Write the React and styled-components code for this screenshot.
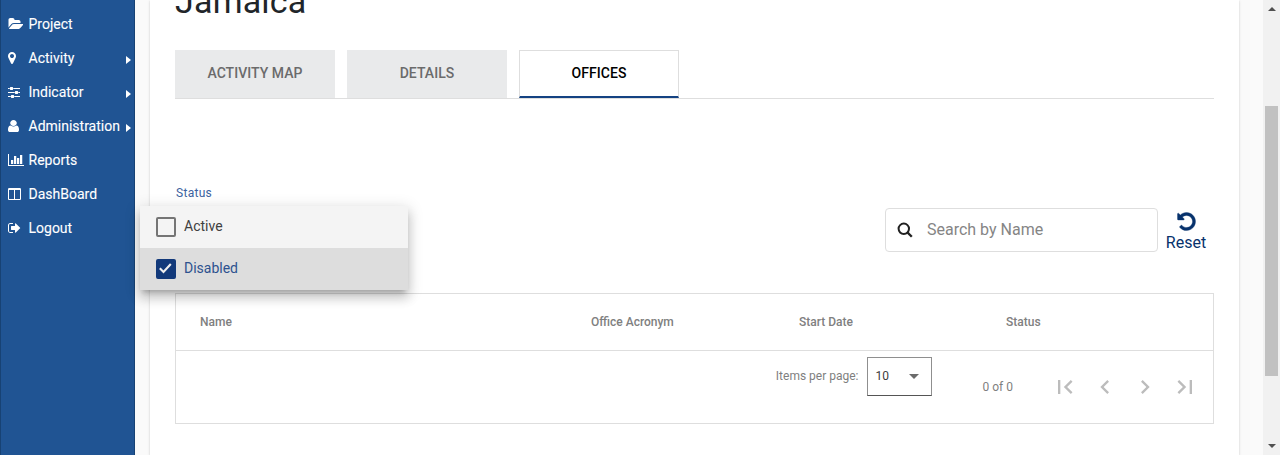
import React from "react";
import styled, { createGlobalStyle, css } from "styled-components";

const GlobalStyle = createGlobalStyle`
  *, *::before, *::after { box-sizing: border-box; }
  html, body { margin: 0; height: 100%; overflow: hidden; }
  body { font-family: Roboto, "Liberation Sans", sans-serif; font-size: 14px; color: #212529; background: #fafafa; }
`;

const Shell = styled.div`
  display: flex;
  height: 455px;
  overflow: hidden;
`;

const Sidebar = styled.nav`
  flex: 0 0 135px;
  padding-top: 7px;
  background: #205493;
  border: solid #174274;
  border-width: 0 1px;
`;

const NavItem = styled.a`
  display: flex;
  align-items: center;
  height: 34px;
  padding: 0 2px 0 7px;
  color: #fff;
  font-size: 14px;
  -webkit-text-stroke: 0.1px #fff;
`;

const NavIcon = styled.span`
  display: flex;
  align-items: center;
  flex: 0 0 20.5px;
  height: 14px;
  svg { display: block; height: 14px; fill: currentColor; }
`;

const Caret = styled.span`
  margin: 4px 1px 0 auto;
  border: solid transparent;
  border-width: 4.5px 0 4.5px 5px;
  border-left-color: #fff;
`;

const Main = styled.main`
  flex: 1;
  display: flex;
  padding: 0 24px 0 15px;
  background: #fafafa;
`;

const Card = styled.section`
  flex: 1;
  padding: 0 25px;
  background: #fff;
  box-shadow: 0 2px 1px -1px rgba(0, 0, 0, 0.2), 0 1px 1px rgba(0, 0, 0, 0.14), 0 1px 3px rgba(0, 0, 0, 0.12);
`;

const Title = styled.h1`
  display: flex;
  align-items: flex-start;
  height: 50px;
  margin: 0;
  font-size: 34px;
  font-weight: 400;
  letter-spacing: 0.2px;
  line-height: 40px;
  span { margin-top: -19px; }
`;

const Tabs = styled.div`
  display: flex;
  gap: 12px;
  height: 49px;
  border-bottom: 1px solid #dedede;
`;

const Tab = styled.button`
  width: 160px;
  height: 48px;
  padding: 0 0 2px;
  border: 0;
  background: #e9eaeb;
  color: #6b6b6b;
  font: 500 14px Roboto, sans-serif;
  letter-spacing: 0.04px;
  ${(p) =>
    p.$active &&
    css`
      background: #fff;
      color: #000;
      border: 1px solid #dedede;
      border-bottom: 2px solid #144282;
    `}
`;

const Filters = styled.div`
  display: flex;
  justify-content: space-between;
  height: 194px;
  padding: 86px 8px 0 1px;
`;

const StatusField = styled.div`
  position: relative;
  width: 232px;
`;

const FieldLabel = styled.label`
  display: block;
  font-size: 12px;
  line-height: 16px;
  letter-spacing: 0.3px;
  color: #3c62a0;
`;

const Menu = styled.div`
  position: absolute;
  top: 21px;
  left: -36px;
  width: 268px;
  background: #f4f4f4;
  box-shadow: 0 5px 5px -3px rgba(0, 0, 0, 0.2), 0 8px 10px 1px rgba(0, 0, 0, 0.14), 0 3px 14px 2px rgba(0, 0, 0, 0.12);
`;

const Option = styled.div`
  display: flex;
  align-items: center;
  gap: 8px;
  height: 42px;
  padding: 0 16px 0 16px;
  font-size: 14px;
  color: ${(p) => (p.$checked ? "#2e528f" : "#404040")};
  background: ${(p) => (p.$checked ? "#dddddd" : "#f4f4f4")};
`;

const OptionText = styled.span`
  padding-bottom: 3px;
`;

const Checkbox = styled.span`
  display: flex;
  align-items: center;
  justify-content: center;
  width: 20px;
  height: 20px;
  border: 2px solid ${(p) => (p.$checked ? "#12397a" : "#757575")};
  border-radius: 2px;
  background: ${(p) => (p.$checked ? "#12397a" : "transparent")};
  svg { display: block; flex: none; }
`;

const SearchArea = styled.div`
  display: flex;
  align-items: flex-start;
  gap: 8px;
  padding-top: 23px;
`;

const SearchBox = styled.div`
  display: flex;
  align-items: center;
  width: 273px;
  height: 44px;
  padding: 0 0 2px 11px;
  border: 1px solid #dedede;
  border-radius: 4px;
  gap: 14px;
  font-size: 16px;
  color: #858585;
  svg { display: block; margin-top: 2px; }
`;

const ResetButton = styled.button`
  display: flex;
  flex-direction: column;
  align-items: center;
  gap: 1px;
  width: 40px;
  margin-top: 3px;
  padding: 0;
  border: 0;
  background: none;
  color: #07326c;
  font: 400 16px/20px Roboto, sans-serif;
  svg { display: block; fill: currentColor; }
`;

const Table = styled.div`
  height: 131px;
  border: 1px solid #dedede;
`;

const HeaderRow = styled.div`
  display: grid;
  grid-template-columns: 391px 208px 207px 1fr;
  align-items: center;
  height: 57px;
  padding-left: 24px;
  border-bottom: 1px solid #dedede;
  color: #808080;
  font-size: 12px;
  font-weight: 500;
`;

const Paginator = styled.div`
  display: flex;
  justify-content: flex-end;
  align-items: flex-start;
  padding: 6px 8px 0 0;
  color: #7f7f7f;
  font-size: 12px;
`;

const PageSize = styled.div`
  display: flex;
  gap: 8px;
  line-height: 38px;
`;

const SizeSelect = styled.div`
  display: flex;
  align-items: center;
  justify-content: space-between;
  width: 65px;
  height: 39px;
  padding: 0 12px 0 8px;
  border: 1px solid #8f8f8f;
  border-bottom-color: #555;
  color: #404040;
  line-height: 14px;
`;

const SizeValue = styled.span`
  padding-bottom: 2px;
`;

const DownArrow = styled.span`
  border: solid transparent;
  border-width: 5px 5px 0;
  border-top-color: #6b6b6b;
`;

const RangeLabel = styled.span`
  margin: 0 32px 0 51px;
  line-height: 60px;
`;

const PageButton = styled.button`
  display: flex;
  align-items: center;
  justify-content: center;
  width: 40px;
  height: 40px;
  margin-top: 10px;
  padding: 0;
  border: 0;
  background: none;
  svg { display: block; fill: #bcbcbc; }
`;

const ScrollTrack = styled.div`
  display: flex;
  flex-direction: column;
  align-items: center;
  flex: 0 0 17px;
  padding: 7px 0;
  background: #f1f1f1;
`;

const ScrollArrow = styled.span`
  border: solid transparent;
  border-width: ${(p) => (p.$up ? "0 4px 4px" : "4px 4px 0")};
  ${(p) => (p.$up ? "border-bottom-color" : "border-top-color")}: #505050;
`;

const ScrollThumb = styled.div`
  width: 13px;
  height: 270px;
  margin: 95px 0 auto;
  background: #c1c1c1;
`;

const icons = {
  folder: ["0 0 1943 1792", 15.2, "M1943 952q0 31-31 66l-336 396q-43 51-120.5 86.5t-143.5 35.5h-1088q-34 0-60.5-13t-26.5-43q0-31 31-66l336-396q43-51 120.5-86.5t143.5-35.5h1088q34 0 60.5 13t26.5 43zm-343-344v160h-832q-94 0-197 47.5t-164 119.5l-337 396-5 6q0-4-.5-12.5t-.5-12.5v-960q0-92 66-158t158-66h320q92 0 158 66t66 158v32h544q92 0 158 66t66 158z"],
  marker: ["384 0 1024 1792", 8, "M1152 640q0-106-75-181t-181-75-181 75-75 181 75 181 181 75 181-75 75-181zm256 0q0 109-33 179l-364 774q-16 33-47.5 52t-67.5 19-67.5-19-46.5-52l-365-774q-33-70-33-179 0-212 150-362t362-150 362 150 150 362z"],
  sliders: ["0 0 1536 1792", 12, "M352 1408v128h-352v-128h352zm352-128q26 0 45 19t19 45v256q0 26-19 45t-45 19h-256q-26 0-45-19t-19-45v-256q0-26 19-45t45-19h256zm160-384v128h-864v-128h864zm-640-512v128h-224v-128h224zm1312 1024v128h-736v-128h736zm-960-1152q26 0 45 19t19 45v256q0 26-19 45t-45 19h-256q-26 0-45-19t-19-45v-256q0-26 19-45t45-19h256zm640 512q26 0 45 19t19 45v256q0 26-19 45t-45 19h-256q-26 0-45-19t-19-45v-256q0-26 19-45t45-19h256zm320 128v128h-224v-128h224zm0-512v128h-864v-128h864z"],
  user: ["256 0 1280 1792", 11, "M1536 1399q0 109-62.5 187t-150.5 78h-854q-88 0-150.5-78t-62.5-187q0-85 8.5-160.5t31.5-152 58.5-131 94-89 134.5-34.5q131 128 313 128t313-128q76 0 134.5 34.5t94 89 58.5 131 31.5 152 8.5 160.5zm-256-887q0 159-112.5 271.5t-271.5 112.5-271.5-112.5-112.5-271.5 112.5-271.5 271.5-112.5 271.5 112.5 112.5 271.5z"],
  chart: ["0 0 2048 1792", 16, "M672 896v512h-288v-512h288zm384-512v1024h-288v-1024h288zm992 1152v128h-2048v-1536h128v1408h1920zm-608-896v768h-288v-768h288zm384-384v1152h-288v-1152h288z"],
  columns: ["0 0 1664 1792", 13, "M160 1536h608v-1152h-640v1120q0 13 9.5 22.5t22.5 9.5zm1376-32v-1120h-640v1152h608q13 0 22.5-9.5t9.5-22.5zm128-1216v1216q0 66-47 113t-113 47h-1344q-66 0-113-47t-47-113v-1216q0-66 47-113t113-47h1344q66 0 113 47t47 113z"],
  logout: ["0 0 1664 1792", 13, "M640 1440q0 4 1 20t.5 26.5-3 23.5-10 19.5-20.5 6.5h-320q-119 0-203.5-84.5t-84.5-203.5v-704q0-119 84.5-203.5t203.5-84.5h320q13 0 22.5 9.5t9.5 22.5q0 4 1 20t.5 26.5-3 23.5-10 19.5-20.5 6.5h-320q-66 0-113 47t-47 113v704q0 66 47 113t113 47h312l11.5 1 11.5 3 8 5.5 7 9 2 13.5zm928-544q0 26-19 45l-544 544q-19 19-45 19t-45-19-19-45v-288h-448q-26 0-45-19t-19-45v-384q0-26 19-45t45-19h448v-288q0-26 19-45t45-19 45 19l544 544q19 19 19 45z"],
};

const navItems = [
  { label: "Project", icon: "folder" },
  { label: "Activity", icon: "marker", sub: true },
  { label: "Indicator", icon: "sliders", sub: true },
  { label: "Administration", icon: "user", sub: true },
  { label: "Reports", icon: "chart" },
  { label: "DashBoard", icon: "columns" },
  { label: "Logout", icon: "logout" },
];

const pageIcons = [
  ["First page", "M18.41 16.59L13.82 12l4.59-4.59L17 6l-6 6 6 6zM6 6h2v12H6z"],
  ["Previous page", "M15.41 7.41L14 6l-6 6 6 6 1.41-1.41L10.83 12z"],
  ["Next page", "M10 6L8.59 7.41 13.17 12l-4.58 4.59L10 18l6-6z"],
  ["Last page", "M5.59 7.41L10.18 12l-4.59 4.59L7 18l6-6-6-6zM16 6h2v12h-2z"],
];

function Glyph({ name }) {
  const [viewBox, width, d] = icons[name];
  return (
    <svg viewBox={viewBox} width={width} height="14" preserveAspectRatio="none" aria-hidden="true">
      <path d={d} />
    </svg>
  );
}

export default function App() {
  return (
    <>
      <GlobalStyle />
      <Shell>
        <Sidebar>
          {navItems.map((item) => (
            <NavItem key={item.label}>
              <NavIcon><Glyph name={item.icon} /></NavIcon>
              {item.label}
              {item.sub && <Caret />}
            </NavItem>
          ))}
        </Sidebar>
        <Main>
          <Card>
            <Title><span>Jamaica</span></Title>
            <Tabs>
              <Tab>ACTIVITY MAP</Tab>
              <Tab>DETAILS</Tab>
              <Tab $active>OFFICES</Tab>
            </Tabs>
            <Filters>
              <StatusField>
                <FieldLabel>Status</FieldLabel>
                <Menu>
                  <Option>
                    <Checkbox />
                    <OptionText>Active</OptionText>
                  </Option>
                  <Option $checked>
                    <Checkbox $checked>
                      <svg width="16" height="16" viewBox="0 0 16 16" fill="none" stroke="#eee" strokeWidth="2.1">
                        <path d="M1.8 7.2l3.7 3.7L12.8 3" />
                      </svg>
                    </Checkbox>
                    <OptionText>Disabled</OptionText>
                  </Option>
                </Menu>
              </StatusField>
              <SearchArea>
                <SearchBox>
                  <svg width="16" height="16" viewBox="0 0 16 16" fill="none" stroke="#212121" strokeWidth="2">
                    <circle cx="6.8" cy="6.8" r="5.2" />
                    <path d="M10.4 10.4l4.4 4.4" strokeWidth="2.3" />
                  </svg>
                  Search by Name
                </SearchBox>
                <ResetButton>
                  <svg width="21" height="21" viewBox="0 0 1792 1792" aria-hidden="true">
                    <path d="M1664 896q0 156-61 298t-164 245-245 164-298 61q-172 0-327-72.5t-264-204.5q-7-10-6.5-22.5t8.5-20.5l137-138q10-9 25-9 16 2 23 12 73 95 179 147t225 52q104 0 198.5-40.5t163.5-109.5 109.5-163.5 40.5-198.5-40.5-198.5-109.5-163.5-163.5-109.5-198.5-40.5q-98 0-188 35.5t-160 101.5l137 138q31 30 14 69-17 40-59 40h-448q-26 0-45-19t-19-45v-448q0-42 40-59 39-17 69 14l130 129q107-101 244.5-156.5t284.5-55.5q156 0 298 61t245 164 164 245 61 298z" stroke="currentColor" strokeWidth="30" />
                  </svg>
                  Reset
                </ResetButton>
              </SearchArea>
            </Filters>
            <Table>
              <HeaderRow>
                <span>Name</span>
                <span>Office Acronym</span>
                <span>Start Date</span>
                <span>Status</span>
              </HeaderRow>
              <Paginator>
                <PageSize>
                  Items per page:
                  <SizeSelect><SizeValue>10</SizeValue><DownArrow /></SizeSelect>
                </PageSize>
                <RangeLabel>0 of 0</RangeLabel>
                {pageIcons.map(([label, d]) => (
                  <PageButton key={label} aria-label={label}>
                    <svg width="28" height="28" viewBox="0 0 24 24"><path d={d} /></svg>
                  </PageButton>
                ))}
              </Paginator>
            </Table>
          </Card>
        </Main>
        <ScrollTrack>
          <ScrollArrow $up />
          <ScrollThumb />
          <ScrollArrow />
        </ScrollTrack>
      </Shell>
    </>
  );
}
